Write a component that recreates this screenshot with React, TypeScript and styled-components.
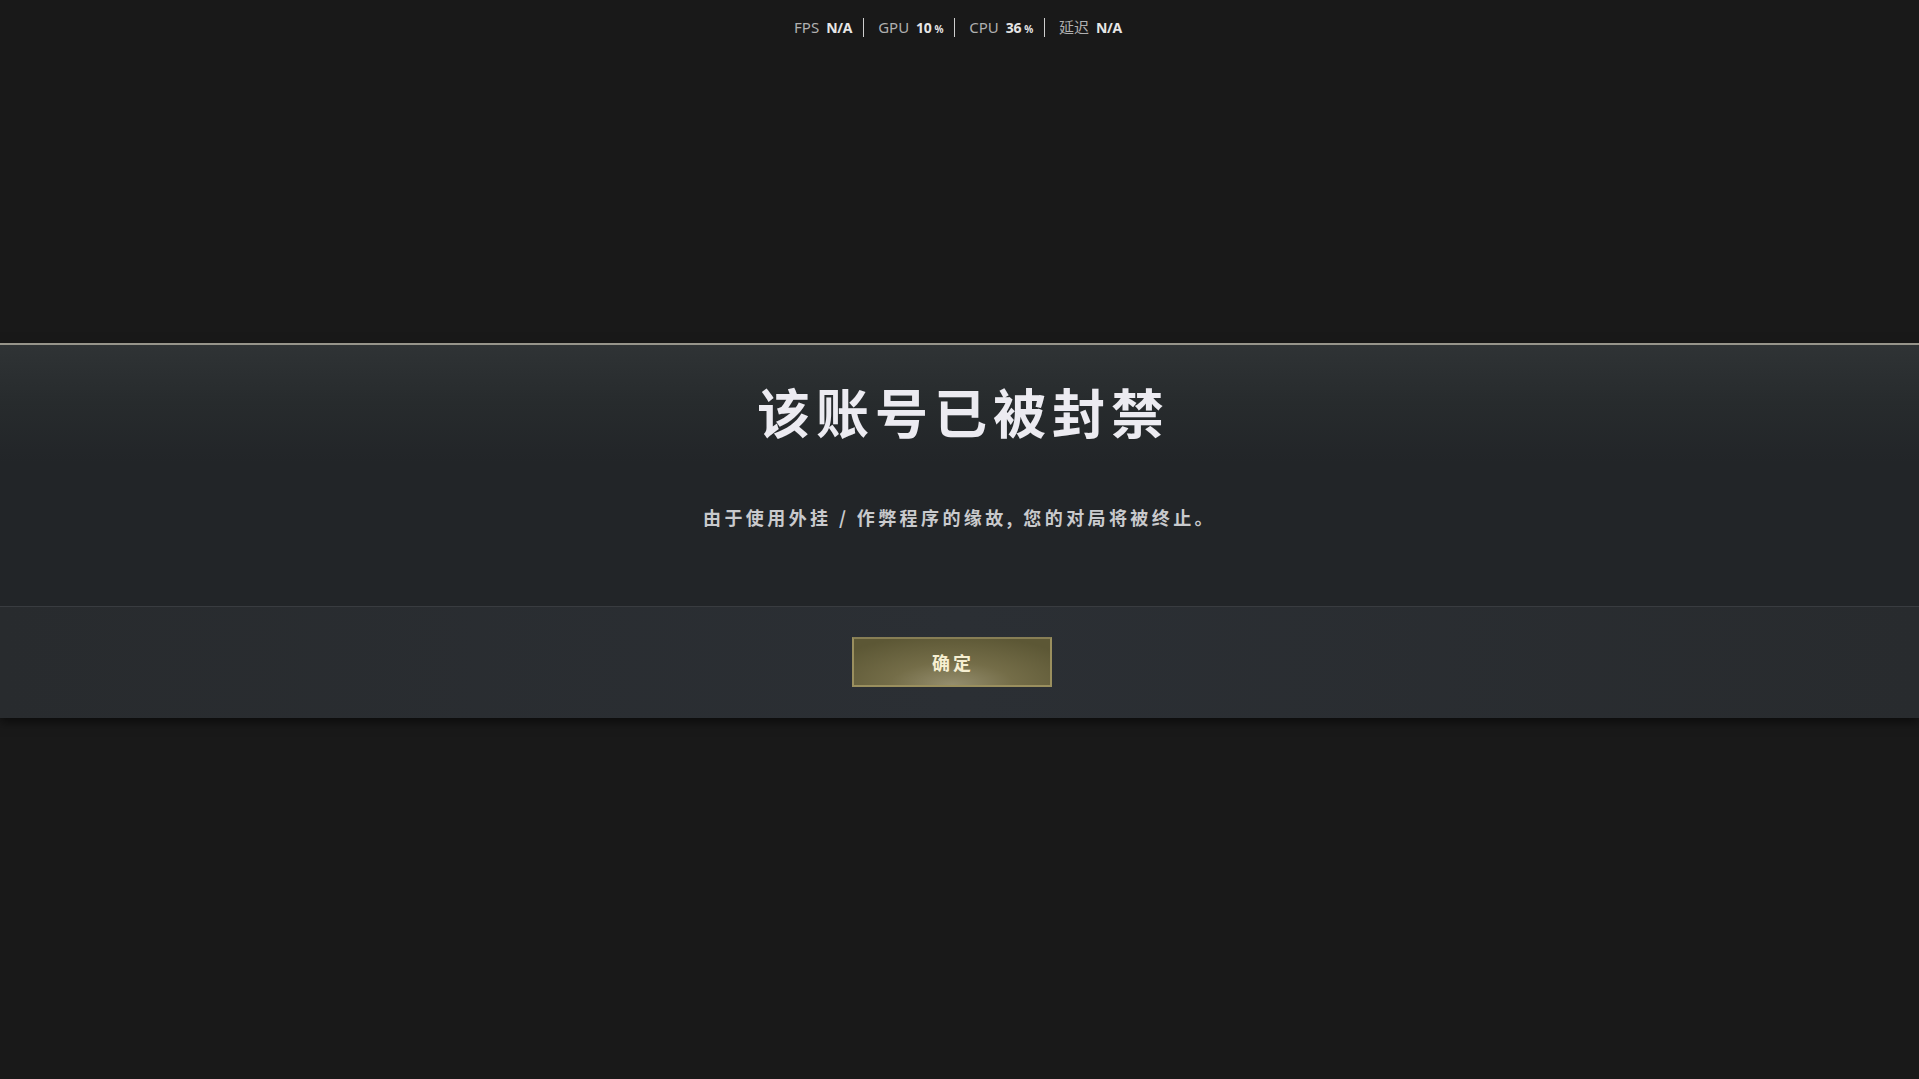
import styled, { createGlobalStyle } from "styled-components";

const GlobalStyle = createGlobalStyle`
  html, body {
    margin: 0;
    padding: 0;
    background: #191919;
  }
  body {
    font-family: "Noto Sans", "Noto Sans CJK SC", sans-serif;
  }
`;

const Page = styled.div`
  width: 100%;
  height: 100vh;
  overflow: hidden;
  background: #191919;
  display: flex;
  flex-direction: column;
`;

const Hud = styled.div`
  height: 54px;
  display: flex;
  justify-content: center;
  align-items: center;
  padding-left: 8px;
`;

const Stat = styled.div<{ $last?: boolean }>`
  display: flex;
  align-items: baseline;
  gap: 7px;
  padding: 0 11px 0 14px;
  height: 19px;
  line-height: 19px;
  border-right: ${(p) => (p.$last ? "none" : "1px solid #cfcfcf")};
  &:first-child {
    padding-left: 0;
  }
`;

const Label = styled.span`
  color: #b0b0b0;
  font-size: 15px;
`;

const Value = styled.span`
  color: #e6e6e6;
  font-size: 14px;
  font-weight: 700;
  letter-spacing: -0.3px;
  & small {
    font-size: 10px;
    margin-left: 3px;
  }
`;

const Banner = styled.div`
  margin-top: 289px;
  border-top: 2px solid #96948a;
  box-shadow: 0 4px 10px rgba(0, 0, 0, 0.55);
  display: flex;
  flex-direction: column;
`;

const Upper = styled.div`
  height: 261px;
  box-sizing: border-box;
  padding-top: 35px;
  background: linear-gradient(
    180deg,
    #2f3335 0%,
    #272b2d 22%,
    #222528 45%,
    #222528 100%
  );
  display: flex;
  flex-direction: column;
  align-items: center;
`;

const Title = styled.h1`
  margin: 0;
  font-family: "Noto Sans CJK SC", sans-serif;
  font-size: 53px;
  line-height: 62px;
  font-weight: 700;
  letter-spacing: 6px;
  padding-left: 8px;
  color: #ecebf1;
`;

const Subtitle = styled.p`
  margin: 62px 0 0;
  font-family: "Noto Sans CJK SC", sans-serif;
  font-size: 18px;
  line-height: 26px;
  font-weight: 700;
  letter-spacing: 3.4px;
  color: #c9cacd;
`;

const Lower = styled.div`
  height: 111px;
  border-top: 1px solid #393c40;
  background: linear-gradient(90deg, #282b2e 0%, #2b2f34 50%, #282b2e 100%);
  display: flex;
  justify-content: center;
  align-items: center;
`;

const ConfirmButton = styled.button`
  width: 200px;
  height: 50px;
  box-sizing: border-box;
  margin: -2px 0 0 -16px;
  border: 2px solid #9a8f5e;
  border-top-color: #877e55;
  background: radial-gradient(
    ellipse 70% 110% at 50% 100%,
    #958e6e 0%,
    #746d48 45%,
    #5c5735 100%
  );
  color: #f6efd2;
  font-family: "Noto Sans CJK SC", sans-serif;
  font-size: 18px;
  font-weight: 700;
  letter-spacing: 3px;
  padding: 0 0 0 3px;
  cursor: pointer;
`;

const stats = [
  { label: "FPS", value: "N/A" },
  { label: "GPU", value: "10", unit: "%" },
  { label: "CPU", value: "36", unit: "%" },
  { label: "延迟", value: "N/A" },
];

export default function App() {
  return (
    <>
      <GlobalStyle />
      <Page>
        <Hud>
          {stats.map((s, i) => (
            <Stat key={s.label} $last={i === stats.length - 1}>
              <Label>{s.label}</Label>
              <Value>
                {s.value}
                {s.unit && <small>{s.unit}</small>}
              </Value>
            </Stat>
          ))}
        </Hud>
        <Banner>
          <Upper>
            <Title>该账号已被封禁</Title>
            <Subtitle>由于使用外挂 / 作弊程序的缘故, 您的对局将被终止。</Subtitle>
          </Upper>
          <Lower>
            <ConfirmButton>确定</ConfirmButton>
          </Lower>
        </Banner>
      </Page>
    </>
  );
}
